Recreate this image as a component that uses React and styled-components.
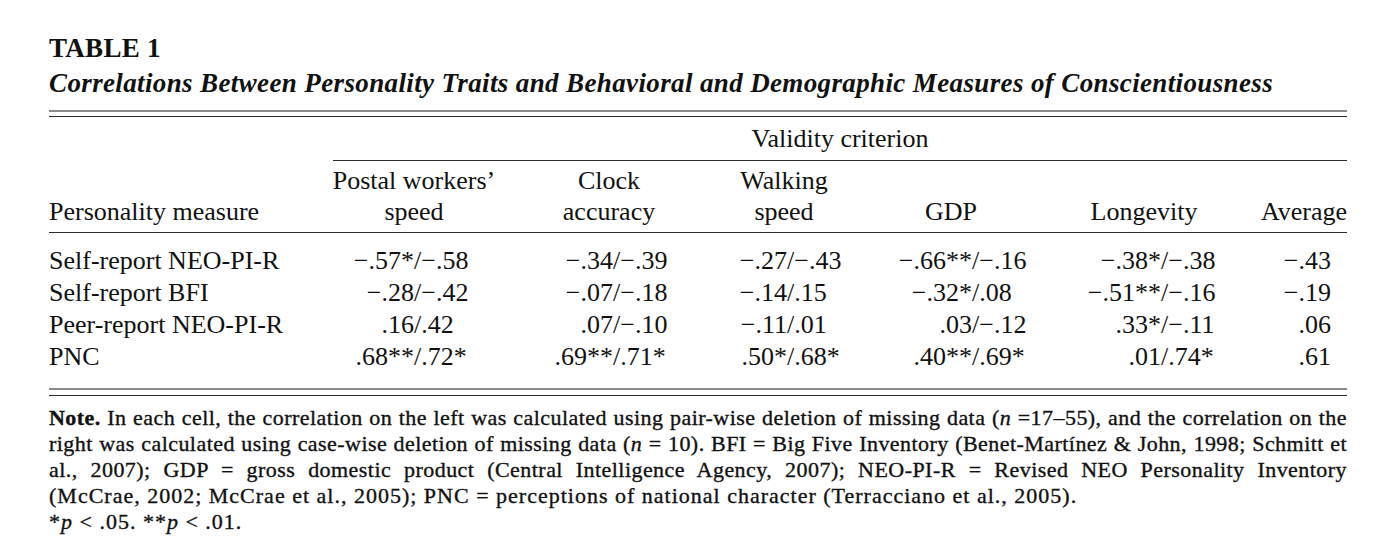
import React from "react";
import styled, { createGlobalStyle } from "styled-components";

const GlobalStyle = createGlobalStyle`
  body {
    margin: 0;
    background: #fff;
    color: #111;
    font-family: "Liberation Serif", "Times New Roman", serif;
  }
`;

const COLS = "284px 81px 81px 118px 110px 64px 58px 127px 85px 104px 70px 116px";

const Page = styled.div`
  width: 1298px;
  padding: 33px 0 0 49px;
`;

const Title = styled.div`
  font-size: 27px;
  line-height: 30px;
  font-weight: 700;
  letter-spacing: 0.3px;
`;

const Caption = styled.div`
  margin-top: 5px;
  font-size: 27px;
  line-height: 30px;
  font-weight: 700;
  font-style: italic;
  letter-spacing: 0.37px;
  white-space: nowrap;
`;

const DoubleRule = styled.div`
  margin-top: ${(p) => p.gap}px;
  height: ${(p) => p.space}px;
  border-top: 2px solid #8a8a8a;
  border-bottom: 1px solid #2b2b2b;
`;

const Grid = styled.div`
  display: grid;
  grid-template-columns: ${COLS};
  font-size: 26px;
`;

const Spanner = styled.div`
  grid-column: 2 / -1;
  text-align: center;
  line-height: 32px;
  padding: 6px 0 5px;
  border-bottom: 1px solid #2b2b2b;
`;

const HeadCell = styled.div`
  grid-column: span ${(p) => p.span || 1};
  display: flex;
  flex-direction: column;
  justify-content: flex-end;
  align-items: ${(p) =>
    p.align === "left" ? "flex-start" : p.align === "right" ? "flex-end" : "center"};
  line-height: 31px;
  padding: 4px 0 5px;
  border-bottom: 1px solid #2b2b2b;
  white-space: nowrap;
`;

const Body = styled(Grid)`
  padding: 12px 0 15px;
`;

const Cell = styled.div`
  line-height: 32px;
  white-space: nowrap;
  text-align: ${(p) => p.align || "left"};
  padding-right: ${(p) => p.pad || 0}px;
`;

const Note = styled.div`
  margin-top: 9px;
  font-size: 22px;
  line-height: 26px;
  -webkit-text-stroke: 0.35px #111;
`;

const NoteLine = styled.div`
  white-space: nowrap;
  letter-spacing: ${(p) => (p.last ? 1 : 0.45)}px;
  text-align: ${(p) => (p.last ? "left" : "justify")};
  text-align-last: ${(p) => (p.last ? "left" : "justify")};
`;

const B = styled.b`
  font-weight: 700;
`;

const headers = [
  ["Postal workers\u2019", "speed"],
  ["Clock", "accuracy"],
  ["Walking", "speed"],
  ["GDP"],
  ["Longevity"],
];

const rows = [
  ["Self-report NEO-PI-R", "\u2212.57*/\u2212.58", "\u2212.34/\u2212.39", "\u2212.27/\u2212.43", "\u2212.66**/\u2212.16", "\u2212.38*/\u2212.38", "\u2212.43"],
  ["Self-report BFI", "\u2212.28/\u2212.42", "\u2212.07/\u2212.18", "\u2212.14/.15", "\u2212.32*/.08", "\u2212.51**/\u2212.16", "\u2212.19"],
  ["Peer-report NEO-PI-R", ".16/.42", ".07/\u2212.10", "\u2212.11/.01", ".03/\u2212.12", ".33*/\u2212.11", ".06"],
  ["PNC", ".68**/.72*", ".69**/.71*", ".50*/.68*", ".40**/.69*", ".01/.74*", ".61"],
];

const App = () => {
  return (
    <Page>
      <GlobalStyle />
      <Title>TABLE 1</Title>
      <Caption>
        Correlations Between Personality Traits and Behavioral and Demographic Measures of Conscientiousness
      </Caption>
      <DoubleRule gap={12} space={4} />
      <Grid>
        <div />
        <Spanner>Validity criterion</Spanner>
        <HeadCell align="left">Personality measure</HeadCell>
        {headers.map((h, i) => (
          <HeadCell key={i} span={2}>
            {h.map((line) => (
              <span key={line}>{line}</span>
            ))}
          </HeadCell>
        ))}
        <HeadCell align="right">Average</HeadCell>
      </Grid>
      <Body>
        {rows.map((r) => (
          <React.Fragment key={r[0]}>
            <Cell>{r[0]}</Cell>
            {r.slice(1, 6).map((v, i) => {
              const [a, b] = v.split("/");
              return (
                <React.Fragment key={i}>
                  <Cell align="right">{a}</Cell>
                  <Cell>/{b}</Cell>
                </React.Fragment>
              );
            })}
            <Cell align="right" pad={16}>{r[6]}</Cell>
          </React.Fragment>
        ))}
      </Body>
      <DoubleRule gap={0} space={5} />
      <Note>
        <NoteLine>
          <B>Note.</B> In each cell, the correlation on the left was calculated using pair-wise deletion of missing data (<i>n</i> =17–55), and the correlation on the
        </NoteLine>
        <NoteLine>
          right was calculated using case-wise deletion of missing data (<i>n</i> = 10). BFI = Big Five Inventory (Benet-Martínez &amp; John, 1998; Schmitt et
        </NoteLine>
        <NoteLine>
          al., 2007); GDP = gross domestic product (Central Intelligence Agency, 2007); NEO-PI-R = Revised NEO Personality Inventory
        </NoteLine>
        <NoteLine last>
          (McCrae, 2002; McCrae et al., 2005); PNC = perceptions of national character (Terracciano et al., 2005).
        </NoteLine>
        <NoteLine last>
          *<i>p</i> &lt; .05. **<i>p</i> &lt; .01.
        </NoteLine>
      </Note>
    </Page>
  );
};

export default App;
